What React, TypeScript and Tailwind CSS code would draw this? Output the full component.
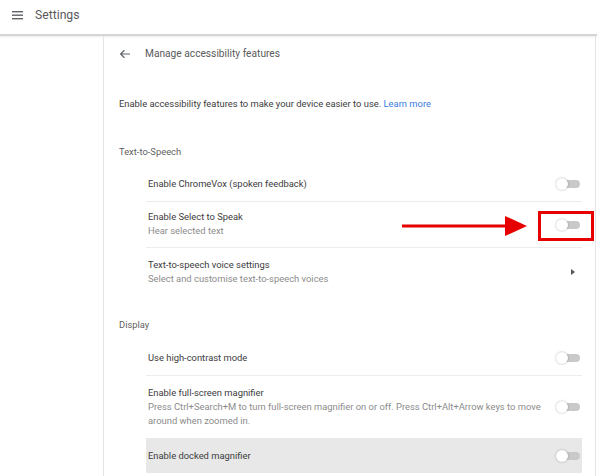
import React from 'react'

function Toggle() {
  return (
    <div className="relative w-[24px] h-[12px] shrink-0">
      <div className="absolute right-0 top-[2px] w-[19px] h-[8px] rounded-full bg-[#c9c9c9]" />
      <div className="absolute left-0 top-0 w-[12px] h-[12px] rounded-full bg-white shadow-[0_0_2px_rgba(0,0,0,0.35)]" />
    </div>
  )
}

interface RowProps {
  label: string
  sub?: React.ReactNode
  height: string
  last?: boolean
  shaded?: boolean
  right?: React.ReactNode
}

function Row({ label, sub, height, last, shaded, right }: RowProps) {
  return (
    <div
      className={`flex items-center justify-between pl-[2px] pr-[2px] ${height} ${
        last ? '' : 'border-b border-[#ececec]'
      } ${shaded ? 'bg-[#e8e8e8]' : ''}`}
    >
      <div className="flex flex-col">
        <span className="text-[9.4px] leading-[14px] text-[#3c3c3c]">{label}</span>
        {sub && <span className="text-[9.4px] leading-[14.5px] text-[#8c8c8c] w-[400px]">{sub}</span>}
      </div>
      {right ?? <Toggle />}
    </div>
  )
}

export default function App() {
  return (
    <div className="w-[597px] h-[476px] bg-white overflow-hidden relative font-['Roboto',sans-serif]">
      {/* Header */}
      <div className="h-[36px] flex items-start pt-[8px] pl-[12px] gap-[12px] border-b-2 border-[#d5d5d5] shadow-[0_1px_2px_rgba(0,0,0,0.08)]">
        <svg width="11" height="12" viewBox="0 0 11 12" className="mt-[1px]">
          <rect x="0" y="2" width="11" height="1.4" fill="#5f6368" />
          <rect x="0" y="5.5" width="11" height="1.4" fill="#5f6368" />
          <rect x="0" y="9" width="11" height="1.4" fill="#5f6368" />
        </svg>
        <span className="text-[12.2px] leading-[14px] text-[#5a5a5a]">Settings</span>
      </div>

      <div className="flex h-[440px]">
        {/* Sidebar */}
        <div className="w-[103px] shrink-0" />

        {/* Card */}
        <div className="w-[493px] border-l border-r border-[#e4e4e4] flex flex-col pl-[15px]">
          <div className="h-[36px] flex items-center gap-[14px]">
            <svg width="12" height="10" viewBox="0 0 12 10">
              <path d="M11 5H2M5.5 1.2L1.6 5l3.9 3.8" stroke="#5f6368" strokeWidth="1.2" fill="none" />
            </svg>
            <span className="text-[10.2px] text-[#5a5a5a]">Manage accessibility features</span>
          </div>

          <div className="mt-[20px] h-[24px] flex items-center text-[9.4px] text-[#3c3c3c]">
            Enable accessibility features to make your device easier to use.&nbsp;
            <span className="text-[#3b7be0]">Learn more</span>
          </div>

          <div className="mt-[24px] h-[24px] flex items-center text-[9.4px] text-[#5f5f5f]">Text-to-Speech</div>

          <div className="mt-[3px] ml-[27px] w-[436px] flex flex-col">
            <Row label="Enable ChromeVox (spoken feedback)" height="h-[35px]" />
            <Row label="Enable Select to Speak" sub="Hear selected text" height="h-[46px]" />
            <Row
              label="Text-to-speech voice settings"
              sub="Select and customise text-to-speech voices"
              height="h-[48px]"
              last
              right={
                <svg width="4" height="6" viewBox="0 0 4 6" className="mr-[5px]">
                  <path d="M0 0L4 3L0 6Z" fill="#555" />
                </svg>
              }
            />
          </div>

          <div className="mt-[17px] h-[24px] flex items-center text-[9.4px] text-[#5f5f5f]">Display</div>

          <div className="mt-[4px] ml-[27px] w-[436px] flex flex-col">
            <Row label="Use high-contrast mode" height="h-[35px]" />
            <Row
              label="Enable full-screen magnifier"
              sub="Press Ctrl+Search+M to turn full-screen magnifier on or off. Press Ctrl+Alt+Arrow keys to move around when zoomed in."
              height="h-[62px]"
              last
            />
            <Row label="Enable docked magnifier" height="h-[35px]" shaded last />
          </div>
        </div>
      </div>

      {/* Annotation */}
      <div className="absolute left-[538px] top-[211px] w-[56px] h-[30px] border-[3px] border-[#e60000]" />
      <svg className="absolute left-[400px] top-[214px]" width="130" height="24" viewBox="0 0 130 24">
        <rect x="2" y="10.5" width="106" height="3" fill="#e60000" />
        <path d="M105 2L127 12L105 22Z" fill="#e60000" />
      </svg>
    </div>
  )
}
